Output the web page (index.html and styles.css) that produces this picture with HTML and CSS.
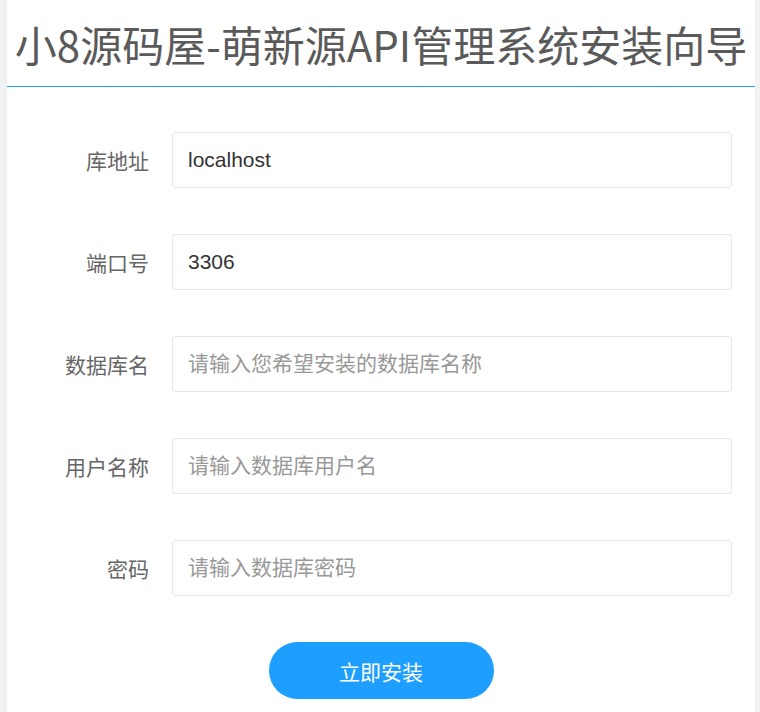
FILE: index.html
```html
<!DOCTYPE html>
<html lang="zh-CN">
<head>
    <meta charset="UTF-8">
    <meta name="viewport" content="width=device-width, initial-scale=1.0">
    <title>小8源码屋-萌新源API管理系统安装向导</title>
    <link rel="stylesheet" href="styles.css">
</head>
<body>
    <div class="wrap">
        <h1 class="title">小8源码屋-萌新源API管理系统安装向导</h1>

        <form class="install-form" onsubmit="return false;">
            <div class="form-item">
                <label class="form-label">库地址</label>
                <input class="form-input" type="text" name="host" value="localhost">
            </div>
            <div class="form-item">
                <label class="form-label">端口号</label>
                <input class="form-input" type="text" name="port" value="3306">
            </div>
            <div class="form-item">
                <label class="form-label">数据库名</label>
                <input class="form-input" type="text" name="dbname" placeholder="请输入您希望安装的数据库名称">
            </div>
            <div class="form-item">
                <label class="form-label">用户名称</label>
                <input class="form-input" type="text" name="user" placeholder="请输入数据库用户名">
            </div>
            <div class="form-item">
                <label class="form-label">密码</label>
                <input class="form-input" type="password" name="pass" placeholder="请输入数据库密码">
            </div>
            <div class="form-submit">
                <button class="btn" type="submit">立即安装</button>
            </div>
        </form>
    </div>
</body>
</html>
```

FILE: styles.css
```css
html, body {
    margin: 0;
    padding: 0;
}
body {
    background-color: #f2f2f2;
    font-family: "Liberation Sans", "Noto Sans CJK SC", sans-serif;
    color: #333;
}
.wrap {
    margin-left: 7px;
    width: 748px;
    min-height: 712px;
    background-color: #fff;
}
.title {
    margin: 0;
    height: 86px;
    line-height: 88px;
    border-bottom: 1px solid #1e9fff;
    text-align: center;
    font-family: "Noto Sans CJK SC", sans-serif;
    font-size: 42px;
    font-weight: normal;
    color: #5a5a5a;
    white-space: nowrap;
    overflow: hidden;
}
.install-form {
    padding: 45px 23px 0 0;
}
.form-item {
    display: flex;
    align-items: center;
    margin-bottom: 46px;
}
.form-label {
    width: 142px;
    padding-right: 23px;
    text-align: right;
    font-family: "Noto Sans CJK SC", sans-serif;
    font-size: 21px;
    color: #666;
}
.form-input {
    flex: 1;
    height: 56px;
    box-sizing: border-box;
    border: 1px solid #e6e6e6;
    border-radius: 3px;
    padding: 0 15px;
    font-family: "Liberation Sans", "Noto Sans CJK SC", sans-serif;
    font-size: 21px;
    color: #333;
    outline: none;
}
.form-input::placeholder {
    font-family: "Noto Sans CJK SC", sans-serif;
    color: #999;
}
.form-submit {
    display: flex;
    justify-content: center;
    padding-left: 23px;
}
.btn {
    width: 225px;
    height: 57px;
    border: none;
    border-radius: 29px;
    background-color: #1e9fff;
    color: #fff;
    font-family: "Noto Sans CJK SC", sans-serif;
    font-size: 21px;
    cursor: pointer;
}
```
